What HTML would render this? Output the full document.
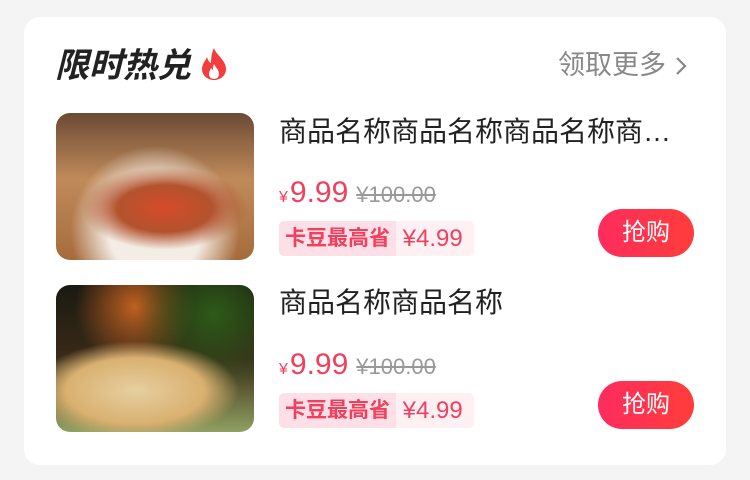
<!DOCTYPE html>
<html><head><meta charset="utf-8"><style>
body{margin:0;width:750px;height:480px;background:#f4f4f4;font-family:"Liberation Sans","Noto Sans CJK SC",sans-serif;position:relative;overflow:hidden}
.card{position:absolute;left:24px;top:17px;width:702px;height:448px;background:#fff;border-radius:16px}
.t{position:absolute;left:55px;top:46px;font-size:34px;font-weight:bold;font-style:italic;color:#222;line-height:40px;white-space:nowrap}
.more{position:absolute;left:558px;top:48px;font-size:27px;color:#888;line-height:34px;white-space:nowrap}
.img{position:absolute;left:56px;width:198px;height:147px;border-radius:14px;overflow:hidden}
.name{position:absolute;left:279px;font-size:28px;color:#222;line-height:38px;white-space:nowrap}
.price{position:absolute;left:279px;color:#f0405e;line-height:36px;white-space:nowrap}
.price b{font-size:30px;font-weight:normal;margin-left:2px}
.price s{color:#999;font-size:22px;margin-left:8px}
.tag{position:absolute;left:279px;width:195px;height:35px;border-radius:5px;background:#fff0f3;overflow:hidden;font-size:24px;line-height:35px;color:#f0405e;white-space:nowrap}
.tag span{display:inline-block;background:#fde0e7;padding:0 6px;font-weight:bold;font-size:21px;vertical-align:top}
.btn{position:absolute;left:598px;width:96px;height:48px;border-radius:24px;background:linear-gradient(90deg,#fe2c5e,#ff3d3a);color:#fff;font-size:24px;line-height:48px;text-align:center}
</style></head><body>
<div class="card"></div>
<div class="t">限时热兑<svg width="30" height="34" viewBox="0 0 30 34" style="vertical-align:-4px;margin-left:8px"><path d="M15 1C17 8 27 13 27 22C27 29 21 33 15 33C9 33 3 29 3 22C3 17 7 13 8 10C9 14 11 16 12 16C12 10 13 5 15 1Z" fill="#f33c3c"/><path d="M15 17C17 21 20 23 20 27C20 30 18 32 15 32C12 32 10 30 10 27C10 24 12 22 12 21C13 22 14 23 14 23C14 21 14 19 15 17Z" fill="#fff"/></svg></div>
<div class="more">领取更多 <svg width="14" height="20" viewBox="0 0 14 20" style="vertical-align:-2px"><path d="M3 2L11 10L3 18" stroke="#888" stroke-width="2.2" fill="none"/></svg></div>

<div class="img" style="top:113px;background:radial-gradient(ellipse 60% 40% at 55% 65%,#d64a2a,#b3532e 40%,transparent 70%),radial-gradient(circle at 50% 80%,#f3ede6 30%,transparent 55%),linear-gradient(180deg,#6b4a35,#c08a5a 45%,#a66b3c)"></div>
<div class="name" style="top:113px">商品名称商品名称商品名称商…</div>
<div class="price" style="top:175px">¥<b>9.99</b><s>¥100.00</s></div>
<div class="tag" style="top:221px"><span>卡豆最高省</span> ¥4.99</div>
<div class="btn" style="top:209px">抢购</div>

<div class="img" style="top:285px;background:radial-gradient(ellipse 70% 45% at 40% 72%,#e6cfa0,#d9b070 50%,transparent 75%),radial-gradient(circle at 80% 20%,#2d5a18,transparent 40%),radial-gradient(circle at 40% 15%,#c06020,transparent 35%),linear-gradient(180deg,#1a1a12,#3a2a18 50%,#8fa060)"></div>
<div class="name" style="top:284px">商品名称商品名称</div>
<div class="price" style="top:347px">¥<b>9.99</b><s>¥100.00</s></div>
<div class="tag" style="top:393px"><span>卡豆最高省</span> ¥4.99</div>
<div class="btn" style="top:381px">抢购</div>
</body></html>
